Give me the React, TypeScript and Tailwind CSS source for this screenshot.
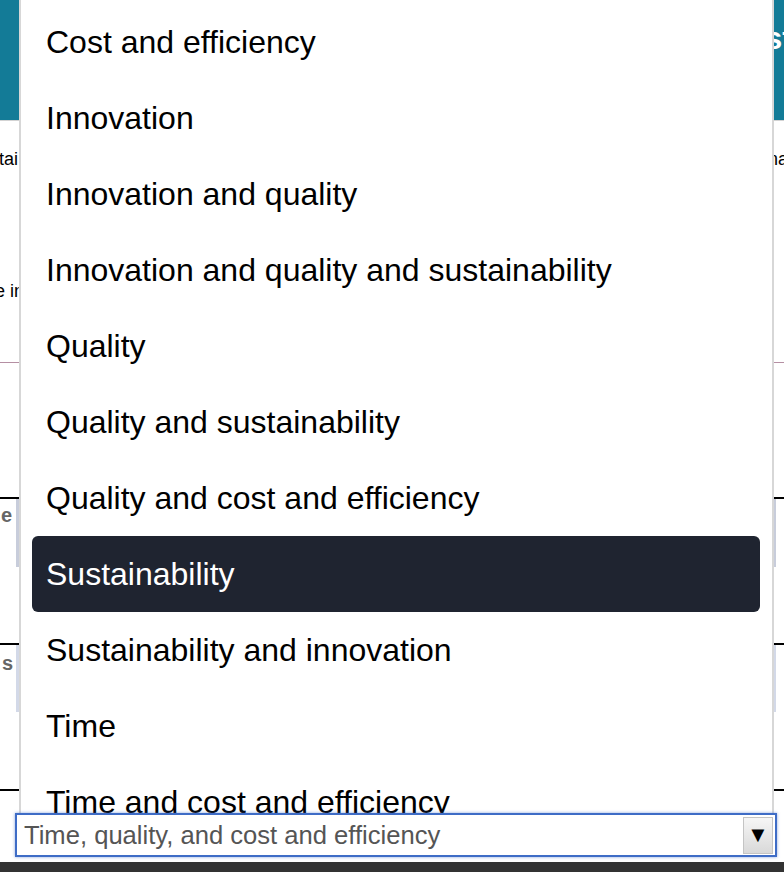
import React from "react";

const options = [
  "Cost and efficiency",
  "Innovation",
  "Innovation and quality",
  "Innovation and quality and sustainability",
  "Quality",
  "Quality and sustainability",
  "Quality and cost and efficiency",
  "Sustainability",
  "Sustainability and innovation",
  "Time",
  "Time and cost and efficiency",
  "Time, quality, and cost and efficiency",
];

const App: React.FC = () => {
  const selected = "Sustainability";

  return (
    <div className="relative w-[784px] h-[872px] overflow-hidden bg-white font-['Liberation_Sans',Arial,sans-serif] text-black">
      {/* page behind the open list */}
      <header className="h-[121px] bg-[#137b97] border-b border-[#d3d3d3] flex justify-end items-start pt-[18px]">
        <h1 className="-mr-[9px] text-[32px] leading-[40px] font-bold text-white">Sust</h1>
      </header>

      <div className="pt-[26px] flex justify-between text-[18px] leading-[24px]">
        <span className="-ml-[1px]">tai</span>
        <span className="-mr-[4px]">na</span>
      </div>
      <p className="mt-[108px] -ml-[5px] text-[18px] leading-[24px]">e in</p>

      <div className="mt-[59px] border-t border-[#b58fa3]" />

      <div className="mt-[134px] border-t-2 border-black">
        <div className="flex h-[68px]">
          <div className="w-[16px] flex justify-end pr-[4px] pt-[4px] text-[20px] leading-[24px] font-bold text-[#666]">e</div>
          <div className="flex-1 mr-[8px] border-x-[3px] border-[#c8cddb]" />
        </div>
      </div>

      <div className="mt-[76px] border-t-2 border-black">
        <div className="flex h-[67px]">
          <div className="w-[16px] flex justify-end pr-[3px] pt-[6px] text-[20px] leading-[24px] font-bold text-[#666]">s</div>
          <div className="flex-1 mr-[8px] border-x-[3px] border-[#d3d9e8]" />
        </div>
      </div>

      <div className="mt-[77px] border-t-2 border-black" />

      {/* focused select */}
      <div className="relative z-20 mt-[22px] mx-[15px] w-[762px] h-[44px] border-2 border-[#3e6cc6] bg-white shadow-[0_0_3px_rgba(62,108,198,0.6)] flex items-center justify-between">
        <span className="pl-[7px] text-[25.6px] leading-[30px] text-[#555]">{options[11]}</span>
        <span className="mr-[2px] w-[30px] h-[37px] flex items-center justify-center bg-gradient-to-b from-[#f6f6f6] to-[#d9d9d9] border border-[#c4c4c4] text-[22px] leading-none">
          ▼
        </span>
      </div>

      <div className="mt-[5px] h-[10px] bg-[#333]" />

      {/* open option list */}
      <div className="absolute left-[19px] top-0 z-10 w-[755px] h-[814px] overflow-hidden bg-white border-x-2 border-[#d7d7d7] pt-[4px] pl-[11px] pr-[12px]">
        {options.map((opt) => (
          <div
            key={opt}
            className={`h-[76px] px-[14px] flex items-center rounded-md text-[32px] leading-[40px] whitespace-nowrap ${
              opt === selected ? "bg-[#1f2430] text-white" : "text-black"
            }`}
          >
            {opt}
          </div>
        ))}
      </div>
    </div>
  );
};

export default App;
